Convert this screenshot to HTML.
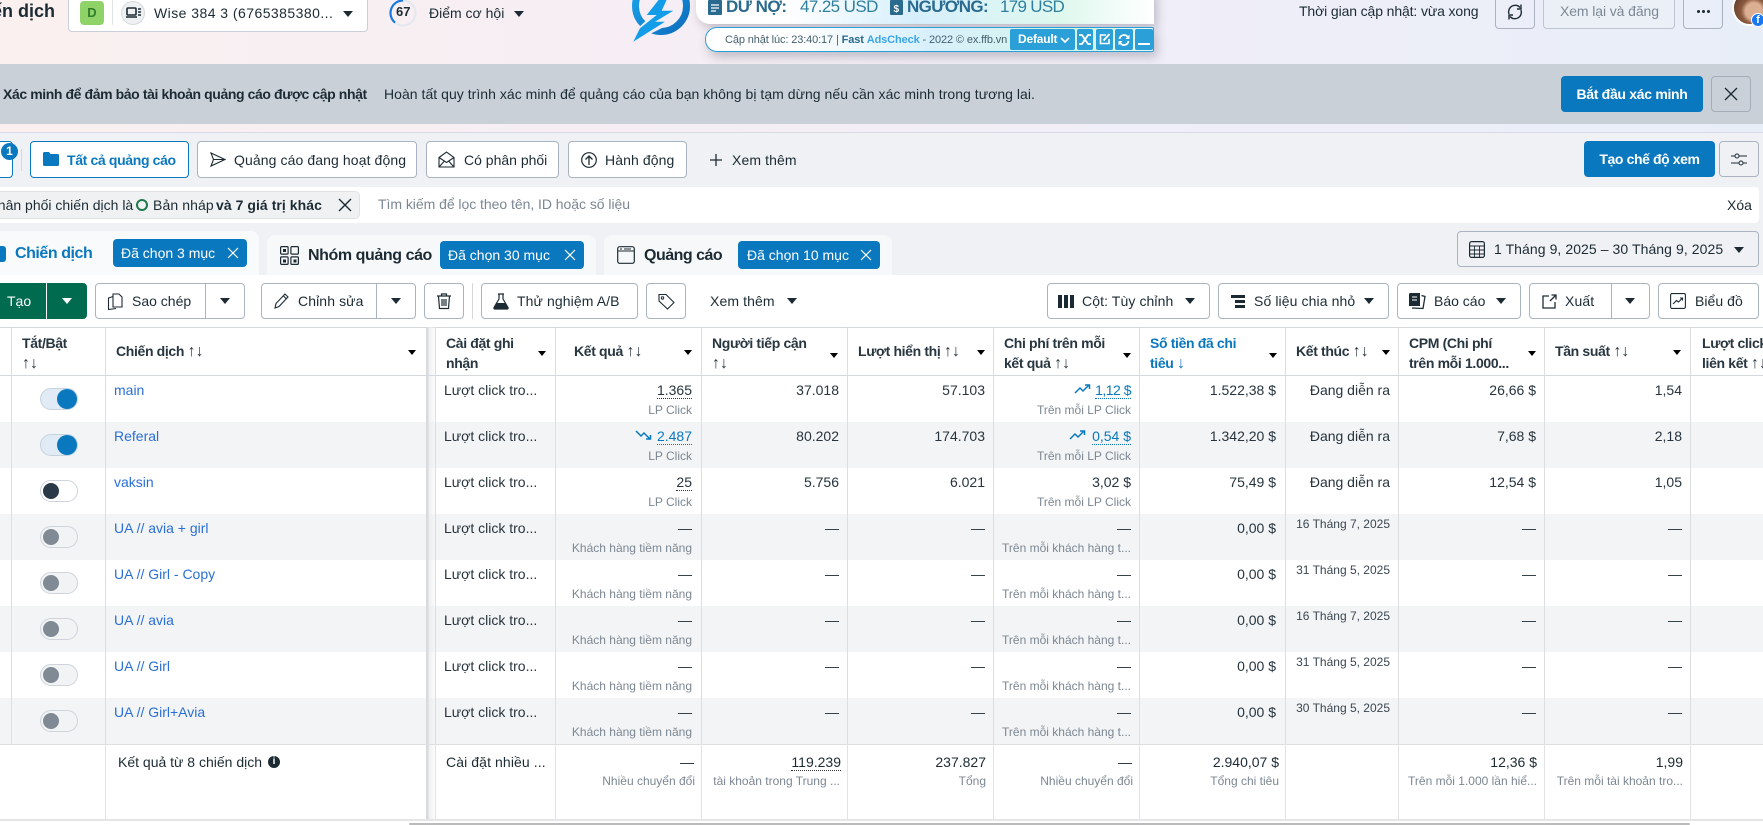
<!DOCTYPE html>
<html lang="vi"><head><meta charset="utf-8"><title>Chiến dịch</title>
<style>
*{box-sizing:border-box}
html,body{margin:0;padding:0;width:1763px;height:825px;overflow:hidden;background:#fff;font-family:"Liberation Sans","Noto Sans CJK SC",sans-serif;font-size:14px;color:#1c2b33}
.a{position:absolute}
.t{position:absolute;white-space:nowrap;line-height:20px}
.b{font-weight:700;letter-spacing:-.35px}
.btn{position:absolute;background:#fff;border:1px solid #a9b4c0;border-radius:4px}
.ca{position:absolute;width:0;height:0;border-left:5.5px solid transparent;border-right:5.5px solid transparent;border-top:6px solid #1c2b33}
.hc{position:absolute;width:0;height:0;border-left:4.5px solid transparent;border-right:4.5px solid transparent;border-top:5px solid #000}
.chip{position:absolute;background:#0a78be;border-radius:4px;height:28px}
.chip .t{color:#fff;top:4px}
.v{position:absolute;top:327px;width:1px;height:417px;background:#dcdee2}
.vs{position:absolute;top:744px;width:1px;height:75px;background:#e1e3e6}
.h{position:absolute;font-weight:700;font-size:14px;line-height:20px;white-space:nowrap;color:#283640;letter-spacing:-.35px}
.h span{font-size:16px;letter-spacing:0}
.row{position:absolute;left:0;width:1763px;height:46px}
.g{background:#f3f4f6}
.n{position:absolute;left:114px;top:4px;color:#2a6fd6;line-height:20px;white-space:nowrap}
.set{position:absolute;left:444px;top:4px;line-height:20px;white-space:nowrap;color:#27343d}
.tg{position:absolute;left:40px;top:12px;width:38px;height:22px;border-radius:11px;border:1px solid #ced4da;background:#fff}
.tg i{position:absolute;border-radius:50%;display:block}
.on{background:#e0ebf5;border-color:#c6d2dd}
.on i{left:16px;top:0;width:20px;height:20px;background:#0a78be}
.dk i{left:2px;top:2px;width:16px;height:16px;background:#2a3a48}
.gy i{left:2px;top:2px;width:16px;height:16px;background:#7f8a94}
.gy{background:#f1f3f5}
.m,.s,.d{position:absolute;white-space:nowrap;line-height:20px}
.m{top:4px;color:#27343d}
.s{top:24px;font-size:12px;color:#7c8792}
.d{top:0;font-size:12px;color:#3a4650;right:373px}
.r1{right:1071px}.r2{right:924px}.r3{right:778px}.r4{right:632px}.r5{right:487px}.r6{right:373px}.r7{right:227px}.r8{right:81px}
.blue{color:#0a78be}
.dot{border-bottom:1px dotted #333;line-height:16px;display:inline-block}
.dotb{border-bottom:1px dotted #0a78be;line-height:16px;display:inline-block}
svg{position:absolute;overflow:visible}
</style></head><body>

<!-- top background -->
<div class="a" style="left:0;top:0;width:1763px;height:133px;background:linear-gradient(90deg,#faf0f0 0%,#f5eef4 40%,#f0eef8 65%,#e8eef8 100%)"></div>
<div class="a" style="left:0;top:132px;width:1763px;height:1px;background:#d8dbe3"></div>
<div class="a" style="left:0;top:133px;width:1763px;height:142px;background:#eff1f5"></div>

<div class="t" style="left:-13px;top:1px;font-size:18px;font-weight:700">iến dịch</div>
<div class="a" style="left:68px;top:-3px;width:300px;height:35px;background:#fff;border:1px solid #c8cfd9;border-radius:4px"></div>
<div class="a" style="left:80px;top:1px;width:24px;height:24px;background:#8fd268;border-radius:4px;color:#2f7d2a;font-weight:700;font-size:13px;line-height:24px;text-align:center">D</div>
<div class="a" style="left:112px;top:0;width:1px;height:25px;background:#dfe2e6"></div>
<div class="a" style="left:121px;top:1px;width:24px;height:24px;background:#eef0f2;border:1px solid #d5d9de;border-radius:50%"></div>
<svg style="left:126px;top:7px" width="15" height="12" viewBox="0 0 15 12"><rect x="1" y="1" width="9" height="7" fill="none" stroke="#1c2b33" stroke-width="1.6" rx="1"/><path d="M0 10h11M12 2h3M12 5h3M12 8h3" stroke="#1c2b33" stroke-width="1.4"/></svg>
<div class="t" style="left:154px;top:3px;letter-spacing:.45px">Wise 384 3 (6765385380...</div>
<div class="ca" style="left:343px;top:11px"></div>
<svg style="left:389px;top:-1px" width="28" height="28" viewBox="0 0 28 28"><circle cx="14" cy="14" r="12.5" fill="none" stroke="#e2e7f0" stroke-width="2"/><path d="M14 1.5A12.5 12.5 0 0 0 6 23.6" fill="none" stroke="#1877e0" stroke-width="2.2"/></svg>
<div class="t" style="left:396px;top:2px;font-size:13px;font-weight:700">67</div>
<div class="t" style="left:429px;top:3px;font-size:14px">Điểm cơ hội</div>
<div class="ca" style="left:514px;top:11px"></div>

<!-- Extension logo -->
<svg style="left:632px;top:-22px" width="60" height="66" viewBox="0 0 60 66">
<defs><linearGradient id="lg" x1="0" y1="0" x2="1" y2="1"><stop offset="0" stop-color="#1ba8ee"/><stop offset="1" stop-color="#0d6dbd"/></linearGradient></defs>
<circle cx="29" cy="28" r="25.5" fill="none" stroke="url(#lg)" stroke-width="7"/>
<path d="M34 8L10 37H20L4 52L0 65L38 46H28L46 31H35L42 8Z" fill="#f3eef5"/>
<path d="M36 10L14.700 37H24.700L8 50.300L1.300 63.700L33 43.700H23L41.300 32.700H29.700L40 10Z" fill="#139ce8"/>
</svg>

<!-- Extension panel -->
<div class="a" style="left:696px;top:-10px;width:458px;height:34px;border-radius:0 0 0 14px;background:linear-gradient(90deg,#fff 0%,#fff 20%,#d6effc 48%,#dff8ee 80%,#fff 100%);box-shadow:3px 4px 10px rgba(70,70,90,.3)"></div>
<svg style="left:708px;top:0" width="14" height="15" viewBox="0 0 14 15"><rect width="14" height="15" rx="1" fill="#2a6a8e"/><path d="M3 5h8M3 8h8M3 11h5" stroke="#fff" stroke-width="1.2"/></svg>
<div class="t" style="left:726px;top:-3px;font-size:17px;font-weight:700;color:#2a6a8e;letter-spacing:-.5px">DƯ NỢ:</div>
<div class="t" style="left:800px;top:-3px;font-size:17px;color:#2f7f9e;letter-spacing:-.6px">47.25 USD</div>
<svg style="left:890px;top:0" width="13" height="15" viewBox="0 0 13 15"><rect width="13" height="15" rx="1" fill="#2a6a8e"/><text x="3.5" y="12" font-size="10" font-weight="700" fill="#fff" font-family="Liberation Sans">$</text></svg>
<div class="t" style="left:907px;top:-3px;font-size:17px;font-weight:700;color:#2a6a8e;letter-spacing:-.6px">NGƯỠNG:</div>
<div class="t" style="left:1000px;top:-3px;font-size:17px;color:#2f7f9e;letter-spacing:-.7px">179 USD</div>

<div class="a" style="left:705px;top:27px;width:449px;height:25px;border:1px solid #2a9fd8;border-radius:12px 2px 2px 12px;background:linear-gradient(90deg,#fff 0%,#fff 20%,#d8f0fc 50%,#d4f5e6 85%,#e8f8f4 100%);box-shadow:3px 5px 10px rgba(70,70,90,.3)"></div>
<div class="t" style="left:725px;top:30px;font-size:11px;color:#44606e;letter-spacing:-.12px">Cập nhật lúc: 23:40:17 | <b style="color:#2a6a8e">Fast</b> <b style="color:#3aa6e8">AdsCheck</b> - 2022 © ex.ffb.vn</div>
<div class="a" style="left:1010px;top:29px;width:65px;height:21px;background:#2a9fd8;border-radius:2px"></div>
<div class="t" style="left:1018px;top:29px;font-size:12px;font-weight:700;color:#fff;letter-spacing:-.2px">Default</div>
<svg style="left:1060px;top:37px" width="10" height="6"><path d="M1 1l4 4 4-4" fill="none" stroke="#fff" stroke-width="1.7"/></svg>
<div class="a" style="left:1077px;top:29px;width:16px;height:21px;background:#2a9fd8;border-radius:2px"></div>
<svg style="left:1079px;top:34px" width="12" height="11"><path d="M0 1h3l6 9h3M0 10h3l6-9h3" fill="none" stroke="#fff" stroke-width="1.8"/></svg>
<div class="a" style="left:1096px;top:29px;width:17px;height:21px;background:#2a9fd8;border-radius:2px"></div>
<svg style="left:1099px;top:33px" width="12" height="12"><path d="M7 2H1.500V10.500H10V6" fill="none" stroke="#fff" stroke-width="1.600"/><path d="M4.500 7.500L10.500 1" stroke="#fff" stroke-width="2"/></svg>
<div class="a" style="left:1115px;top:29px;width:18px;height:21px;background:#2a9fd8;border-radius:2px"></div>
<svg style="left:1118px;top:34px" width="12" height="12"><path d="M1.500 5A4.500 4.500 0 0 1 10 3.500M10.500 7A4.500 4.500 0 0 1 2 8.500" fill="none" stroke="#fff" stroke-width="1.800"/><path d="M11.500 0.500V5H7.500zM.5 11.500V7H4.500z" fill="#fff"/></svg>
<div class="a" style="left:1135px;top:29px;width:18px;height:21px;background:#2a9fd8;border-radius:2px"></div>
<div class="a" style="left:1138px;top:43px;width:12px;height:2px;background:#fff"></div>

<!-- top right -->
<div class="t" style="left:1299px;top:1px;letter-spacing:-.12px">Thời gian cập nhật: vừa xong</div>
<div class="a" style="left:1495px;top:-4px;width:40px;height:33px;border:1px solid #aab3bf;border-radius:4px"></div>
<svg style="left:1507px;top:4px" width="16" height="16" viewBox="0 0 16 16"><path d="M2 10A6.500 6.500 0 0 1 13 3.500M14 6A6.500 6.500 0 0 1 3 12.500" fill="none" stroke="#1c2b33" stroke-width="1.400"/><path d="M14 0.500V5H10M2 15.500V11H6" fill="none" stroke="#1c2b33" stroke-width="1.400"/></svg>
<div class="a" style="left:1543px;top:-4px;width:132px;height:33px;border:1px solid #bcc5d0;border-radius:4px;background:#ebf0f7"></div>
<div class="t" style="left:1560px;top:1px;color:#7d8894;letter-spacing:-.1px">Xem lại và đăng</div>
<div class="a" style="left:1683px;top:-4px;width:40px;height:33px;border:1px solid #aab3bf;border-radius:4px"></div>
<div class="a" style="left:1697px;top:10px;width:3px;height:3px;border-radius:50%;background:#1c2b33;box-shadow:5px 0 #1c2b33,10px 0 #1c2b33"></div>
<div class="a" style="left:1732px;top:-10px;width:36px;height:36px;border-radius:50%;border:2px solid #fff;background:radial-gradient(circle at 62% 60%,#dcae92 0 30%,#8a5a3e 46%,#4a2d1e 100%)"></div>
<div class="a" style="left:1751px;top:13px;width:14px;height:14px;border-radius:50%;background:#1877f2;border:1px solid #fff;color:#fff;font-weight:700;font-size:11px;line-height:13px;text-align:center">f</div>

<!-- Banner -->
<div class="a" style="left:0;top:64px;width:1763px;height:60px;background:#c9d0d8"></div>
<div class="t" style="left:3px;top:84px;font-size:14px;font-weight:700;letter-spacing:-.4px">Xác minh để đảm bảo tài khoản quảng cáo được cập nhật</div>
<div class="t" style="left:384px;top:84px;font-size:14px;letter-spacing:.035px">Hoàn tất quy trình xác minh để quảng cáo của bạn không bị tạm dừng nếu cần xác minh trong tương lai.</div>
<div class="a" style="left:1561px;top:76px;width:142px;height:36px;background:#0a78be;border-radius:4px;color:#fff;font-weight:700;line-height:36px;text-align:center;letter-spacing:-.3px">Bắt đầu xác minh</div>
<div class="a" style="left:1711px;top:76px;width:40px;height:36px;border:1px solid #a4adb7;border-radius:4px"></div>
<svg style="left:1725px;top:88px" width="12" height="12"><path d="M0 0L12 12M12 0L0 12" stroke="#1c2b33" stroke-width="1.300"/></svg>

<!-- Views row -->
<div class="btn" style="left:-6px;top:141px;width:19px;height:37px;border-color:#0a78be"></div>
<div class="a" style="left:1px;top:143px;width:17px;height:17px;border-radius:50%;background:#0a78be;color:#fff;font-weight:700;font-size:12px;line-height:17px;text-align:center">1</div>
<div class="a" style="left:21px;top:149px;width:1px;height:22px;background:#d5d9de"></div>
<div class="btn" style="left:30px;top:141px;width:159px;height:37px;border-color:#0a78be"></div>
<svg style="left:43px;top:152px" width="16" height="14"><path d="M0 1.500A1.500 1.500 0 0 1 1.500 0H6L7.500 2H14.500A1.500 1.500 0 0 1 16 3.500V12.500A1.500 1.500 0 0 1 14.500 14H1.500A1.500 1.500 0 0 1 0 12.500Z" fill="#0a78be"/></svg>
<div class="t b" style="left:67px;top:150px;color:#0a78be">Tất cả quảng cáo</div>
<div class="btn" style="left:197px;top:141px;width:220px;height:37px"></div>
<svg style="left:210px;top:152px" width="16" height="15"><path d="M1 1L15 7.500L1 14L3.500 7.500ZM3.500 7.500H15" fill="none" stroke="#1c2b33" stroke-width="1.100"/></svg>
<div class="t" style="left:234px;top:150px;letter-spacing:.1px">Quảng cáo đang hoạt động</div>
<div class="btn" style="left:426px;top:141px;width:133px;height:37px"></div>
<svg style="left:438px;top:151px" width="17" height="17"><path d="M1 6.500L8.500 1L16 6.500V16H1ZM1 6.500L8.500 11.500L16 6.500M1 16L6.500 10M16 16L10.500 10" fill="none" stroke="#1c2b33" stroke-width="1.100"/></svg>
<div class="t" style="left:464px;top:150px">Có phân phối</div>
<div class="btn" style="left:568px;top:141px;width:119px;height:37px"></div>
<svg style="left:581px;top:152px" width="16" height="16"><circle cx="8" cy="8" r="7.300" fill="none" stroke="#1c2b33" stroke-width="1.200"/><path d="M8 13V4M4.500 7.500L8 4L11.500 7.500" fill="none" stroke="#1c2b33" stroke-width="1.300"/></svg>
<div class="t" style="left:605px;top:150px;letter-spacing:.1px">Hành động</div>
<svg style="left:710px;top:154px" width="12" height="12"><path d="M6 0V12M0 6H12" stroke="#1c2b33" stroke-width="1.300"/></svg>
<div class="t" style="left:732px;top:150px;letter-spacing:.1px">Xem thêm</div>
<div class="a" style="left:1584px;top:141px;width:131px;height:36px;background:#0a78be;border-radius:4px;color:#fff;font-weight:700;line-height:36px;text-align:center;letter-spacing:-.4px">Tạo chế độ xem</div>
<div class="a" style="left:1719px;top:141px;width:40px;height:36px;border:1px solid #aab3bf;border-radius:4px"></div>
<svg style="left:1731px;top:153px" width="16" height="13"><path d="M0 3H4M8 3H16M0 10H8M12 10H16" stroke="#1c2b33"/><circle cx="6" cy="3" r="2" fill="none" stroke="#1c2b33"/><circle cx="10" cy="10" r="2" fill="none" stroke="#1c2b33"/></svg>

<!-- Filter row -->
<div class="a" style="left:0;top:187px;width:1759px;height:36px;background:#fff;border-radius:0 4px 4px 0"></div>
<div class="a" style="left:-6px;top:191px;width:366px;height:28px;background:#f0f1f3;border:1px solid #dfe1e4;border-radius:5px"></div>
<div class="t" style="left:-10px;top:195px">phân phối chiến dịch là</div>
<div class="a" style="left:136px;top:199px;width:12px;height:12px;border:2px solid #1f7a4d;border-radius:50%"></div>
<div class="t" style="left:153px;top:195px;letter-spacing:.1px">Bản nháp</div>
<div class="t" style="left:216px;top:195px;font-weight:700;letter-spacing:.05px">và 7 giá trị khác</div>
<svg style="left:339px;top:199px" width="12" height="12"><path d="M0 0L12 12M12 0L0 12" stroke="#1c2b33" stroke-width="1.400"/></svg>
<div class="t" style="left:378px;top:194px;color:#7c8792;letter-spacing:-.04px">Tìm kiếm để lọc theo tên, ID hoặc số liệu</div>
<div class="t" style="left:1727px;top:195px">Xóa</div>

<!-- Tabs -->
<div class="a" style="left:-8px;top:231px;width:267px;height:50px;background:#f8fafc;border-radius:8px 8px 0 0"></div>
<div class="a" style="left:-8px;top:246px;width:14px;height:16px;background:#0a78be;border-radius:3px"></div>
<div class="t" style="left:15px;top:244px;font-size:16px;font-weight:700;color:#0a78be;letter-spacing:-.45px">Chiến dịch</div>
<div class="chip" style="left:113px;top:239px;width:134px"><div class="t" style="left:8px">Đã chọn 3 mục</div></div>
<svg style="left:228px;top:248px" width="10" height="10"><path d="M0 0L10 10M10 0L0 10" stroke="#fff" stroke-width="1.200"/></svg>

<div class="a" style="left:267px;top:235px;width:329px;height:46px;background:#f7f8fa;border-radius:8px 8px 0 0"></div>
<svg style="left:280px;top:246px" width="19" height="19"><rect x=".6" y=".6" width="7.500" height="7.500" rx="1" fill="none" stroke="#1c2b33" stroke-width="1.200"/><rect x="10.900" y=".6" width="7.500" height="7.500" rx="1" fill="none" stroke="#1c2b33" stroke-width="1.200"/><rect x=".6" y="10.900" width="7.500" height="7.500" rx="1" fill="none" stroke="#1c2b33" stroke-width="1.200"/><rect x="10.900" y="10.900" width="7.500" height="7.500" rx="1" fill="none" stroke="#1c2b33" stroke-width="1.200"/><rect x="3" y="3" width="3" height="3" fill="#1c2b33"/><rect x="13.500" y="13.500" width="3" height="3" fill="#1c2b33"/><rect x="3" y="13.500" width="3" height="3" fill="#1c2b33"/></svg>
<div class="t" style="left:308px;top:246px;font-size:16px;font-weight:700;letter-spacing:-.42px">Nhóm quảng cáo</div>
<div class="chip" style="left:440px;top:241px;width:144px"><div class="t" style="left:8px">Đã chọn 30 mục</div></div>
<svg style="left:565px;top:250px" width="10" height="10"><path d="M0 0L10 10M10 0L0 10" stroke="#fff" stroke-width="1.200"/></svg>

<div class="a" style="left:604px;top:235px;width:288px;height:46px;background:#f7f8fa;border-radius:8px 8px 0 0"></div>
<svg style="left:617px;top:246px" width="18" height="18"><rect x=".7" y=".7" width="16.600" height="16.600" rx="2" fill="none" stroke="#1c2b33" stroke-width="1.200"/><path d="M1 5H17" stroke="#1c2b33"/><path d="M3 3H5M7 3H14" stroke="#1c2b33"/></svg>
<div class="t" style="left:644px;top:246px;font-size:16px;font-weight:700;letter-spacing:-.5px">Quảng cáo</div>
<div class="chip" style="left:738px;top:241px;width:142px"><div class="t" style="left:9px">Đã chọn 10 mục</div></div>
<svg style="left:861px;top:250px" width="10" height="10"><path d="M0 0L10 10M10 0L0 10" stroke="#fff" stroke-width="1.200"/></svg>

<div class="a" style="left:1457px;top:231px;width:302px;height:36px;border:1px solid #a9b4c0;border-radius:4px;background:#eff1f5"></div>
<svg style="left:1469px;top:241px" width="16" height="17"><rect x=".6" y=".6" width="14.800" height="15.800" rx="2" fill="none" stroke="#1c2b33" stroke-width="1.200"/><path d="M1 5H15M1 9H15M1 13H15M5.500 5V16M10.500 5V16" stroke="#1c2b33" stroke-width=".9"/></svg>
<div class="t" style="left:1494px;top:239px;letter-spacing:.07px">1 Tháng 9, 2025 – 30 Tháng 9, 2025</div>
<div class="ca" style="left:1734px;top:247px"></div>

<!-- Toolbar -->
<div class="a" style="left:0;top:275px;width:1763px;height:52px;background:#fff"></div>
<div class="a" style="left:-6px;top:283px;width:52px;height:36px;background:#006b4e;border-radius:4px 0 0 4px"></div>
<div class="a" style="left:47px;top:283px;width:40px;height:36px;background:#006b4e;border-radius:0 4px 4px 0"></div>
<div class="t" style="left:7px;top:291px;color:#fff">Tạo</div>
<div class="ca" style="left:62px;top:298px;border-top-color:#fff"></div>

<div class="btn" style="left:95px;top:283px;width:150px;height:36px"></div>
<div class="a" style="left:205px;top:284px;width:1px;height:34px;background:#a9b4c0"></div>
<svg style="left:107px;top:293px" width="16" height="17"><path d="M6 1H12L15 4V14H6ZM6 3.500L1.500 5V16.500L9 15.500" fill="none" stroke="#1c2b33" stroke-width="1.100"/></svg>
<div class="t" style="left:132px;top:291px">Sao chép</div>
<div class="ca" style="left:220px;top:298px"></div>

<div class="btn" style="left:261px;top:283px;width:155px;height:36px"></div>
<div class="a" style="left:376px;top:284px;width:1px;height:34px;background:#a9b4c0"></div>
<svg style="left:274px;top:293px" width="15" height="16"><path d="M1 15L2 10.500L11 1L14 4L5 13.500ZM9.500 3L12.500 6" fill="none" stroke="#1c2b33" stroke-width="1.100"/></svg>
<div class="t" style="left:298px;top:291px;letter-spacing:.1px">Chỉnh sửa</div>
<div class="ca" style="left:391px;top:298px"></div>

<div class="btn" style="left:424px;top:283px;width:40px;height:36px"></div>
<svg style="left:437px;top:293px" width="14" height="16"><path d="M0 3H14M4.500 3V1H9.500V3M1.500 3L2.500 15.500H11.500L12.500 3M5 6V13M7 6V13M9 6V13" fill="none" stroke="#1c2b33" stroke-width="1.200"/></svg>
<div class="a" style="left:472px;top:283px;width:1px;height:36px;background:#d5d9de"></div>

<div class="btn" style="left:481px;top:283px;width:157px;height:36px"></div>
<svg style="left:493px;top:293px" width="16" height="17"><path d="M5 1H11M6 1V6L1 14.500Q0.500 16 2 16H14Q15.500 16 15 14.500L10 6V1" fill="none" stroke="#1c2b33" stroke-width="1.200"/><path d="M3.800 10H12.200L15 15.500H1Z" fill="#1c2b33"/></svg>
<div class="t" style="left:517px;top:291px;letter-spacing:.1px">Thử nghiệm A/B</div>

<div class="btn" style="left:646px;top:283px;width:40px;height:36px"></div>
<svg style="left:658px;top:293px" width="17" height="17"><path d="M1 1.500H8L16 9.500L9.500 16L1 8Z" fill="none" stroke="#1c2b33" stroke-width="1.100"/><circle cx="4.500" cy="5" r="1.200" fill="none" stroke="#1c2b33"/></svg>
<div class="t" style="left:710px;top:291px;letter-spacing:.1px">Xem thêm</div>
<div class="ca" style="left:787px;top:298px"></div>

<div class="btn" style="left:1047px;top:283px;width:163px;height:36px"></div>
<svg style="left:1058px;top:295px" width="16" height="13"><path d="M0 0H4V13H0ZM6 0H10V13H6ZM12 0H16V13H12Z" fill="#1c2b33"/></svg>
<div class="t" style="left:1082px;top:291px;letter-spacing:.1px">Cột: Tùy chỉnh</div>
<div class="ca" style="left:1185px;top:298px"></div>

<div class="btn" style="left:1218px;top:283px;width:171px;height:36px"></div>
<svg style="left:1231px;top:295px" width="14" height="13"><path d="M0 0H14V3H0ZM4 5H14V8H4ZM4 10H14V13H4Z" fill="#1c2b33"/></svg>
<div class="t" style="left:1254px;top:291px;letter-spacing:.1px">Số liệu chia nhỏ</div>
<div class="ca" style="left:1364px;top:298px"></div>

<div class="btn" style="left:1397px;top:283px;width:124px;height:36px"></div>
<svg style="left:1409px;top:293px" width="16" height="16"><path d="M0 1.500Q0 0 1.500 0H11V13H0Z" fill="#1c2b33"/><path d="M12.500 2.500L16 3.500L14 15.500L3 15" fill="none" stroke="#1c2b33" stroke-width="1.300"/><path d="M3 4H8M3 7H8" stroke="#fff"/></svg>
<div class="t" style="left:1434px;top:291px">Báo cáo</div>
<div class="ca" style="left:1496px;top:298px"></div>

<div class="btn" style="left:1529px;top:283px;width:121px;height:36px"></div>
<div class="a" style="left:1611px;top:284px;width:1px;height:34px;background:#a9b4c0"></div>
<svg style="left:1542px;top:294px" width="15" height="15"><path d="M7 2H1V14H13V8M8 7L14 1M9.500 1H14V5.500" fill="none" stroke="#1c2b33" stroke-width="1.300"/></svg>
<div class="t" style="left:1565px;top:291px;letter-spacing:.1px">Xuất</div>
<div class="ca" style="left:1625px;top:298px"></div>

<div class="btn" style="left:1658px;top:283px;width:101px;height:36px"></div>
<svg style="left:1670px;top:293px" width="16" height="16"><rect x=".6" y=".6" width="14.800" height="14.800" rx="1.500" fill="none" stroke="#1c2b33" stroke-width="1.100"/><path d="M3 11L6.500 7.500L8.500 9L12.500 5M10 5H12.500V7.500" fill="none" stroke="#1c2b33" stroke-width="1.100"/></svg>
<div class="t" style="left:1695px;top:291px;letter-spacing:.05px">Biểu đồ</div>

<!-- Table base -->
<div class="a" style="left:0;top:327px;width:1763px;height:492px;background:#fff"></div>
<div class="a" style="left:0;top:327px;width:1763px;height:1px;background:#d5d8dc"></div>

<div class="row" style="top:376px"><div class="tg on"><i></i></div><div class="n">main</div><div class="set">Lượt click tro...</div>
<div class="m r1"><span class="dot">1.365</span></div><div class="s r1">LP Click</div><div class="m r2">37.018</div><div class="m r3">57.103</div>
<div class="m r4 blue" style="letter-spacing:-.5px"><svg style="left:-20px;top:4px" width="16" height="10"><path d="M0 9L5 4L8 7L14 1M10 1H14.500V5" fill="none" stroke="#0a78be" stroke-width="1.500"/></svg><span class="dotb">1,12 $</span></div><div class="s r4">Trên mỗi LP Click</div>
<div class="m r5">1.522,38 $</div><div class="m r6">Đang diễn ra</div><div class="m r7">26,66 $</div><div class="m r8">1,54</div></div>

<div class="row g" style="top:422px"><div class="tg on"><i></i></div><div class="n">Referal</div><div class="set">Lượt click tro...</div>
<div class="m r1 blue"><svg style="left:-21px;top:4px" width="16" height="10"><path d="M0 1L5 6L8 3L14 9M10 9H14.500V5" fill="none" stroke="#0a78be" stroke-width="1.500"/></svg><span class="dotb">2.487</span></div><div class="s r1">LP Click</div><div class="m r2">80.202</div><div class="m r3">174.703</div>
<div class="m r4 blue"><svg style="left:-22px;top:4px" width="16" height="10"><path d="M0 9L5 4L8 7L14 1M10 1H14.500V5" fill="none" stroke="#0a78be" stroke-width="1.500"/></svg><span class="dotb">0,54 $</span></div><div class="s r4">Trên mỗi LP Click</div>
<div class="m r5">1.342,20 $</div><div class="m r6">Đang diễn ra</div><div class="m r7">7,68 $</div><div class="m r8">2,18</div></div>

<div class="row" style="top:468px"><div class="tg dk"><i></i></div><div class="n">vaksin</div><div class="set">Lượt click tro...</div>
<div class="m r1"><span class="dot">25</span></div><div class="s r1">LP Click</div><div class="m r2">5.756</div><div class="m r3">6.021</div>
<div class="m r4">3,02 $</div><div class="s r4">Trên mỗi LP Click</div>
<div class="m r5">75,49 $</div><div class="m r6">Đang diễn ra</div><div class="m r7">12,54 $</div><div class="m r8">1,05</div></div>

<div class="row g" style="top:514px"><div class="tg gy"><i></i></div><div class="n">UA // avia + girl</div><div class="set">Lượt click tro...</div>
<div class="m r1">—</div><div class="s r1">Khách hàng tiềm năng</div><div class="m r2">—</div><div class="m r3">—</div>
<div class="m r4">—</div><div class="s r4">Trên mỗi khách hàng t...</div>
<div class="m r5">0,00 $</div><div class="d">16 Tháng 7, 2025</div><div class="m r7">—</div><div class="m r8">—</div></div>

<div class="row" style="top:560px"><div class="tg gy"><i></i></div><div class="n">UA // Girl - Copy</div><div class="set">Lượt click tro...</div>
<div class="m r1">—</div><div class="s r1">Khách hàng tiềm năng</div><div class="m r2">—</div><div class="m r3">—</div>
<div class="m r4">—</div><div class="s r4">Trên mỗi khách hàng t...</div>
<div class="m r5">0,00 $</div><div class="d">31 Tháng 5, 2025</div><div class="m r7">—</div><div class="m r8">—</div></div>

<div class="row g" style="top:606px"><div class="tg gy"><i></i></div><div class="n">UA // avia</div><div class="set">Lượt click tro...</div>
<div class="m r1">—</div><div class="s r1">Khách hàng tiềm năng</div><div class="m r2">—</div><div class="m r3">—</div>
<div class="m r4">—</div><div class="s r4">Trên mỗi khách hàng t...</div>
<div class="m r5">0,00 $</div><div class="d">16 Tháng 7, 2025</div><div class="m r7">—</div><div class="m r8">—</div></div>

<div class="row" style="top:652px"><div class="tg gy"><i></i></div><div class="n">UA // Girl</div><div class="set">Lượt click tro...</div>
<div class="m r1">—</div><div class="s r1">Khách hàng tiềm năng</div><div class="m r2">—</div><div class="m r3">—</div>
<div class="m r4">—</div><div class="s r4">Trên mỗi khách hàng t...</div>
<div class="m r5">0,00 $</div><div class="d">31 Tháng 5, 2025</div><div class="m r7">—</div><div class="m r8">—</div></div>

<div class="row g" style="top:698px"><div class="tg gy"><i></i></div><div class="n">UA // Girl+Avia</div><div class="set">Lượt click tro...</div>
<div class="m r1">—</div><div class="s r1">Khách hàng tiềm năng</div><div class="m r2">—</div><div class="m r3">—</div>
<div class="m r4">—</div><div class="s r4">Trên mỗi khách hàng t...</div>
<div class="m r5">0,00 $</div><div class="d">30 Tháng 5, 2025</div><div class="m r7">—</div><div class="m r8">—</div></div>

<!-- vertical lines -->
<div class="v" style="left:11px"></div><div class="v" style="left:105px"></div>
<div class="a" style="left:426px;top:327px;width:9px;height:492px;background:linear-gradient(90deg,#d8dadd 0,#d8dadd 2px,rgba(235,236,238,.8) 3px,rgba(245,246,247,.3) 100%)"></div>
<div class="v" style="left:435px"></div><div class="v" style="left:555px"></div><div class="v" style="left:701px"></div><div class="v" style="left:847px"></div><div class="v" style="left:993px"></div><div class="v" style="left:1139px"></div><div class="v" style="left:1285px"></div><div class="v" style="left:1398px"></div><div class="v" style="left:1544px"></div><div class="v" style="left:1690px"></div>
<div class="a" style="left:0;top:375px;width:1763px;height:1px;background:#d5d8dc"></div>
<div class="a" style="left:0;top:744px;width:1763px;height:1px;background:#dcdee2"></div>

<!-- header -->
<div class="h" style="left:22px;top:333px">Tắt/Bật<br><span>↑↓</span></div>
<div class="h" style="left:116px;top:341px">Chiến dịch <span>↑↓</span></div><div class="hc" style="left:408px;top:350px"></div>
<div class="h" style="left:446px;top:333px">Cài đặt ghi<br>nhận</div><div class="hc" style="left:538px;top:351px"></div>
<div class="h" style="left:574px;top:341px">Kết quả <span>↑↓</span></div><div class="hc" style="left:684px;top:350px"></div>
<div class="h" style="left:712px;top:333px">Người tiếp cận<br><span>↑↓</span></div><div class="hc" style="left:830px;top:353px"></div>
<div class="h" style="left:858px;top:341px">Lượt hiển thị <span>↑↓</span></div><div class="hc" style="left:977px;top:350px"></div>
<div class="h" style="left:1004px;top:333px">Chi phí trên mỗi<br>kết quả <span>↑↓</span></div><div class="hc" style="left:1123px;top:353px"></div>
<div class="h" style="left:1150px;top:333px;color:#0a78be">Số tiền đã chi<br>tiêu <span>↓</span></div><div class="hc" style="left:1269px;top:353px"></div>
<div class="h" style="left:1296px;top:341px">Kết thúc <span>↑↓</span></div><div class="hc" style="left:1382px;top:350px"></div>
<div class="h" style="left:1409px;top:333px">CPM (Chi phí<br>trên mỗi 1.000...</div><div class="hc" style="left:1528px;top:351px"></div>
<div class="h" style="left:1555px;top:341px">Tần suất <span>↑↓</span></div><div class="hc" style="left:1673px;top:350px"></div>
<div class="h" style="left:1702px;top:333px">Lượt click vào<br>liên kết <span>↑↓</span></div>

<!-- Summary -->
<div class="vs" style="left:105px"></div><div class="vs" style="left:435px"></div><div class="vs" style="left:555px"></div><div class="vs" style="left:701px"></div><div class="vs" style="left:847px"></div><div class="vs" style="left:993px"></div><div class="vs" style="left:1139px"></div><div class="vs" style="left:1285px"></div><div class="vs" style="left:1398px"></div><div class="vs" style="left:1544px"></div><div class="vs" style="left:1690px"></div>
<div class="t" style="left:118px;top:752px">Kết quả từ 8 chiến dịch</div>
<div class="a" style="left:268px;top:756px;width:12px;height:12px;border-radius:50%;background:#1c2b33;color:#fff;font-size:10px;font-weight:700;line-height:12px;text-align:center">i</div>
<div class="t" style="left:446px;top:752px;letter-spacing:.1px">Cài đặt nhiều ...</div>
<div class="t" style="right:1069px;top:752px">—</div><div class="t" style="right:1068px;top:771px;font-size:12px;color:#7c8792">Nhiều chuyển đổi</div>
<div class="t" style="right:922px;top:752px"><span class="dot">119.239</span></div><div class="t" style="right:923px;top:771px;font-size:12px;color:#7c8792">tài khoản trong Trung ...</div>
<div class="t" style="right:777px;top:752px">237.827</div><div class="t" style="right:777px;top:771px;font-size:12px;color:#7c8792">Tổng</div>
<div class="t" style="right:631px;top:752px">—</div><div class="t" style="right:630px;top:771px;font-size:12px;color:#7c8792">Nhiều chuyển đổi</div>
<div class="t" style="right:484px;top:752px">2.940,07 $</div><div class="t" style="right:484px;top:771px;font-size:12px;color:#7c8792">Tổng chi tiêu</div>
<div class="t" style="right:226px;top:752px">12,36 $</div><div class="t" style="right:226px;top:771px;font-size:12px;color:#7c8792">Trên mỗi 1.000 lần hiể...</div>
<div class="t" style="right:80px;top:752px">1,99</div><div class="t" style="right:80px;top:771px;font-size:12px;color:#7c8792">Trên mỗi tài khoản tro...</div>

<div class="a" style="left:0;top:819px;width:1763px;height:2px;background:#e3e5e8"></div>
<div class="a" style="left:409px;top:823px;width:1281px;height:2px;background:#bbbbbb;border-radius:2px"></div>
</body></html>
